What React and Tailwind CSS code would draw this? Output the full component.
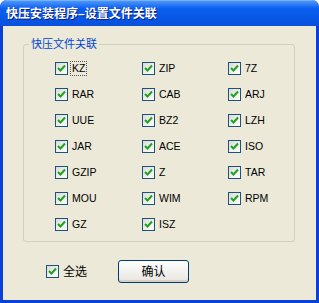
const types = [
  "KZ", "ZIP", "7Z",
  "RAR", "CAB", "ARJ",
  "UUE", "BZ2", "LZH",
  "JAR", "ACE", "ISO",
  "GZIP", "Z", "TAR",
  "MOU", "WIM", "RPM",
  "GZ", "ISZ",
]

function CheckBox() {
  return (
    <span className="w-[13px] h-[13px] border border-[#1c5180] bg-gradient-to-br from-[#dcdcd5] to-white flex items-center justify-center shrink-0">
      <svg width="9" height="9" viewBox="0 0 9 9">
        <path d="M1 4 L3.5 6.5 L8 1.5" fill="none" stroke="#21a121" strokeWidth="2" />
      </svg>
    </span>
  )
}

export default function App() {
  return (
    <div className="w-[319px] h-[303px] flex flex-col bg-[#0a3fd8] rounded-t-[7px] overflow-hidden" style={{ fontFamily: '"Liberation Sans", "Noto Sans CJK SC", sans-serif' }}>
      {/* Title bar */}
      <div className="h-[26px] shrink-0 flex items-center pl-[6px] bg-gradient-to-b from-[#4a96fa] via-[#0a5ff0] via-30% to-[#0750dc] border-t border-[#7ab0ff]">
        <span className="text-white text-[12px] font-bold leading-none" style={{ textShadow: "1px 1px 0 #0a1e80" }}>
          快压安装程序–设置文件关联
        </span>
      </div>

      {/* Client area */}
      <div className="flex-1 mx-[3px] mb-[3px] bg-[#ece9d8] flex flex-col">
        {/* Group box */}
        <div className="relative ml-[20px] mt-[18px] w-[272px] h-[198px] border border-[#d0d0bf] rounded-[3px]">
          <span className="absolute -top-[8px] left-[5px] px-[2px] bg-[#ece9d8] text-[#0046d5] text-[11px] leading-[14px]">
            快压文件关联
          </span>
          <div className="grid grid-cols-[87px_86px_86px] auto-rows-[26px] pl-[31px] pt-[17px]">
            {types.map((t, i) => (
              <div key={t} className="flex items-start">
                <CheckBox />
                <span className={`ml-[3px] text-[10.5px] leading-[13px] text-black px-[1px] ${i === 0 ? "outline outline-1 outline-dotted outline-[#555]" : ""}`}>
                  {t}
                </span>
              </div>
            ))}
          </div>
        </div>

        {/* Bottom row */}
        <div className="flex items-center mt-[18px] ml-[43px]">
          <CheckBox />
          <span className="ml-[4px] text-[12px] text-black leading-none">全选</span>
          <button className="ml-[31px] w-[71px] h-[23px] rounded-[3px] border border-[#003c74] bg-gradient-to-b from-white to-[#e6e5de] text-[12px] text-black leading-none shadow-[inset_0_-2px_0_#d6d0c5]">
            确认
          </button>
        </div>
      </div>
    </div>
  )
}
